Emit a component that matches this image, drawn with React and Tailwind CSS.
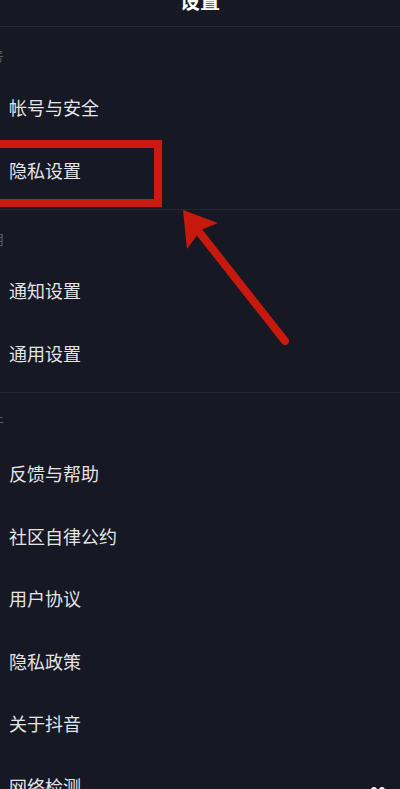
import React from "react";

const sections = [
  { head: "账号", items: ["帐号与安全", "隐私设置"] },
  { head: "通用", items: ["通知设置", "通用设置"] },
  { head: "关于", items: ["反馈与帮助", "社区自律公约", "用户协议", "隐私政策", "关于抖音", "网络检测"] },
];

function Row({ label, last }) {
  return (
    <div className="flex h-[62.5px] items-center pl-[9px] pr-[15px]">
      <span className="text-[18px] leading-none text-[#e4e4e6]">{label}</span>
      {last && (
        <span className="ml-auto mt-[8px] flex gap-[2px]">
          <span className="h-[6px] w-[6px] rounded-full bg-white" />
          <span className="h-[6px] w-[6px] rounded-full bg-white" />
        </span>
      )}
    </div>
  );
}

export default function App() {
  return (
    <div
      className="relative h-[789px] w-[400px] overflow-hidden bg-[#161823]"
      style={{ fontFamily: '"Noto Sans CJK SC", "Noto Sans", sans-serif' }}
    >
      <div className="flex h-[26px] justify-center overflow-hidden">
        <span className="-mt-[9px] text-[20px] font-bold leading-[20px] text-white">设置</span>
      </div>

      {sections.map((s, i) => (
        <div key={s.head} className="border-t border-[#252732] pb-[8px]">
          <div className="flex h-[49px] items-start pt-[22px]">
            <span className="-ml-[22px] text-[13px] leading-[14px] text-[#5d5f68]">{s.head}</span>
          </div>
          {s.items.map((it, j) => (
            <Row key={it} label={it} last={i === 2 && j === s.items.length - 1} />
          ))}
        </div>
      ))}

      {/* red highlight box */}
      <div className="absolute left-[-20px] top-[140px] h-[67px] w-[182px] border-[8px] border-[#cc1a10] shadow-[0_0_2px_#5a0a06]" />

      {/* red arrow */}
      <svg className="absolute left-0 top-0" width="400" height="789" viewBox="0 0 400 789">
        <line x1="196" y1="228" x2="285" y2="341" stroke="#c8190f" strokeWidth="8" strokeLinecap="round" />
        <polygon points="183,210 218,223 201,230 187,249" fill="#c8190f" />
      </svg>
    </div>
  );
}
